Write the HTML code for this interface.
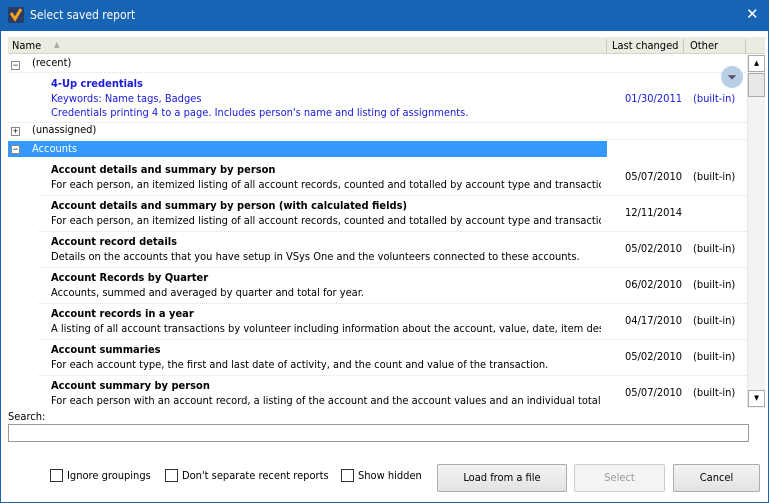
<!DOCTYPE html>
<html><head><style>
*{margin:0;padding:0;box-sizing:border-box}
body{width:769px;height:503px;overflow:hidden;font-family:"DejaVu Sans Condensed","Liberation Sans",sans-serif;font-size:11px;background:#fff;position:relative;color:#000}
.win{position:absolute;left:0;top:0;width:769px;height:503px;border:1px solid #1a64b4;border-top:none}
.title{position:absolute;left:0;top:0;width:769px;height:31px;background:#1763b4;color:#fff;font-size:12px}
.title .t{position:absolute;left:30px;top:8px}
.title .x{position:absolute;left:746px;top:5px;font-size:15px;font-family:"DejaVu Sans",sans-serif}
.list{position:absolute;left:8px;top:37px;width:757px;height:371px;overflow:hidden;background:#fff}
.hdr{position:absolute;left:0;top:0;width:757px;height:17px;background:#ecebe2;border-bottom:1px solid #d6d5cc}
.hdr div{position:absolute;top:2px}
.sep{position:absolute;top:1px;width:1px;height:14px;background:#c8c7be}
.a{position:absolute;white-space:nowrap}
.b{font-weight:bold}
.blue{color:#1a1adc}
.dot{position:absolute;border-top:1px dotted #e0e0e0;height:0}
.sb{position:absolute;left:739px;top:18px;width:18px;height:353px;background:#f3f3f3;border-left:1px solid #e5e5e5}
.box{position:absolute;width:9px;height:9px;border:1px solid #888;background:#fff;font-size:9px;line-height:7px;text-align:center;font-family:"Liberation Sans",sans-serif}
.btn{position:absolute;top:464px;height:28px;border:1px solid #acacac;background:linear-gradient(#f4f4f4,#e3e3e3);text-align:center;line-height:26px;font-size:11px;border-radius:2px}
.cb{position:absolute;top:469px;width:13px;height:13px;border:1px solid #333;background:#fff}
</style></head><body>
<div class="win"></div>
<div class="title"><svg style="position:absolute;left:8px;top:7px" width="16" height="16"><rect width="16" height="16" rx="2" fill="#2a3b66"/><path d="M3 6l4 6 6-10" stroke="#f5a318" stroke-width="3" fill="none"/></svg><span class="t">Select saved report</span><span class="x">✕</span></div>
<div class="list">
<div class="hdr"><div style="left:4px">Name</div><div style="left:46px;color:#aaa;font-size:8px;top:3px">▲</div><div class="sep" style="left:598px"></div><div style="left:604px">Last changed</div><div class="sep" style="left:675px"></div><div style="left:682px">Other</div><div class="sep" style="left:737px"></div></div>
<div class="box" style="left:3px;top:24px">−</div><div class="a" style="left:24px;top:19px">(recent)</div>
<div class="dot" style="left:0;top:35px;width:739px"></div>
<div class="a b blue" style="left:43px;top:40px">4-Up credentials</div>
<div class="a blue" style="left:43px;top:55px">Keywords: Name tags, Badges</div>
<div class="a blue" style="left:43px;top:69px">Credentials printing 4 to a page. Includes person's name and listing of assignments.</div>
<div class="a blue" style="left:617px;top:55px">01/30/2011</div><div class="a blue" style="left:685px;top:55px">(built-in)</div>
<div style="position:absolute;left:713px;top:29px;width:22px;height:22px;border-radius:50%;background:#b8cfe6;color:#556;text-align:center;line-height:22px;font-size:12px">⏷</div>
<div class="dot" style="left:0;top:85px;width:739px"></div>
<div class="box" style="left:3px;top:90px">+</div><div class="a" style="left:24px;top:86px">(unassigned)</div>
<div class="dot" style="left:0;top:102px;width:739px"></div>
<div style="position:absolute;left:0;top:104px;width:599px;height:16px;background:#3399ff"></div>
<div class="box" style="left:3px;top:108px">−</div><div class="a" style="left:24px;top:105px;color:#fff">Accounts</div>
<div id="rows"></div>
<div class="sb"><div style="position:absolute;left:0;top:0;width:17px;height:17px;background:#fff;border:1px solid #aaa;font-size:7px;text-align:center;line-height:15px">▲</div><div style="position:absolute;left:0;top:18px;width:17px;height:24px;background:#e8e8e8;border:1px solid #aaa"></div><div style="position:absolute;left:0;top:335px;width:17px;height:17px;background:#fff;border:1px solid #aaa;font-size:7px;text-align:center;line-height:15px">▼</div></div>
</div>
<script>
var r=[["Account details and summary by person","For each person, an itemized listing of all account records, counted and totalled by account type and transactions","05/07/2010","(built-in)"],
["Account details and summary by person (with calculated fields)","For each person, an itemized listing of all account records, counted and totalled by account type and transactions","12/11/2014",""],
["Account record details","Details on the accounts that you have setup in VSys One and the volunteers connected to these accounts.","05/02/2010","(built-in)"],
["Account Records by Quarter","Accounts, summed and averaged by quarter and total for year.","06/02/2010","(built-in)"],
["Account records in a year","A listing of all account transactions by volunteer including information about the account, value, date, item description","04/17/2010","(built-in)"],
["Account summaries","For each account type, the first and last date of activity, and the count and value of the transaction.","05/02/2010","(built-in)"],
["Account summary by person","For each person with an account record, a listing of the account and the account values and an individual total.","05/07/2010","(built-in)"]];
var h="";r.forEach(function(x,i){var t=126+i*36;
h+='<div class="a b" style="left:43px;top:'+t+'px">'+x[0]+'</div><div class="a" style="left:43px;top:'+(t+15)+'px;width:550px;overflow:hidden">'+x[1]+'</div><div class="a" style="left:617px;top:'+(t+7)+'px">'+x[2]+'</div><div class="a" style="left:685px;top:'+(t+7)+'px">'+x[3]+'</div><div class="dot" style="left:30px;top:'+(t+32)+'px;width:709px"></div>';});
document.getElementById("rows").innerHTML=h;
</script>
<div class="a" style="left:8px;top:410px">Search:</div>
<div style="position:absolute;left:8px;top:424px;width:741px;height:18px;border:1px solid #999;background:#fff"></div>
<div class="cb" style="left:50px"></div><div class="a" style="left:67px;top:469px">Ignore groupings</div>
<div class="cb" style="left:165px"></div><div class="a" style="left:182px;top:469px">Don't separate recent reports</div>
<div class="cb" style="left:341px"></div><div class="a" style="left:358px;top:469px">Show hidden</div>
<div class="btn" style="left:437px;width:130px">Load from a file</div>
<div class="btn" style="left:574px;width:91px;color:#999;background:#f4f4f4;border-color:#ccc">Select</div>
<div class="btn" style="left:673px;width:87px">Cancel</div>
</body></html>
